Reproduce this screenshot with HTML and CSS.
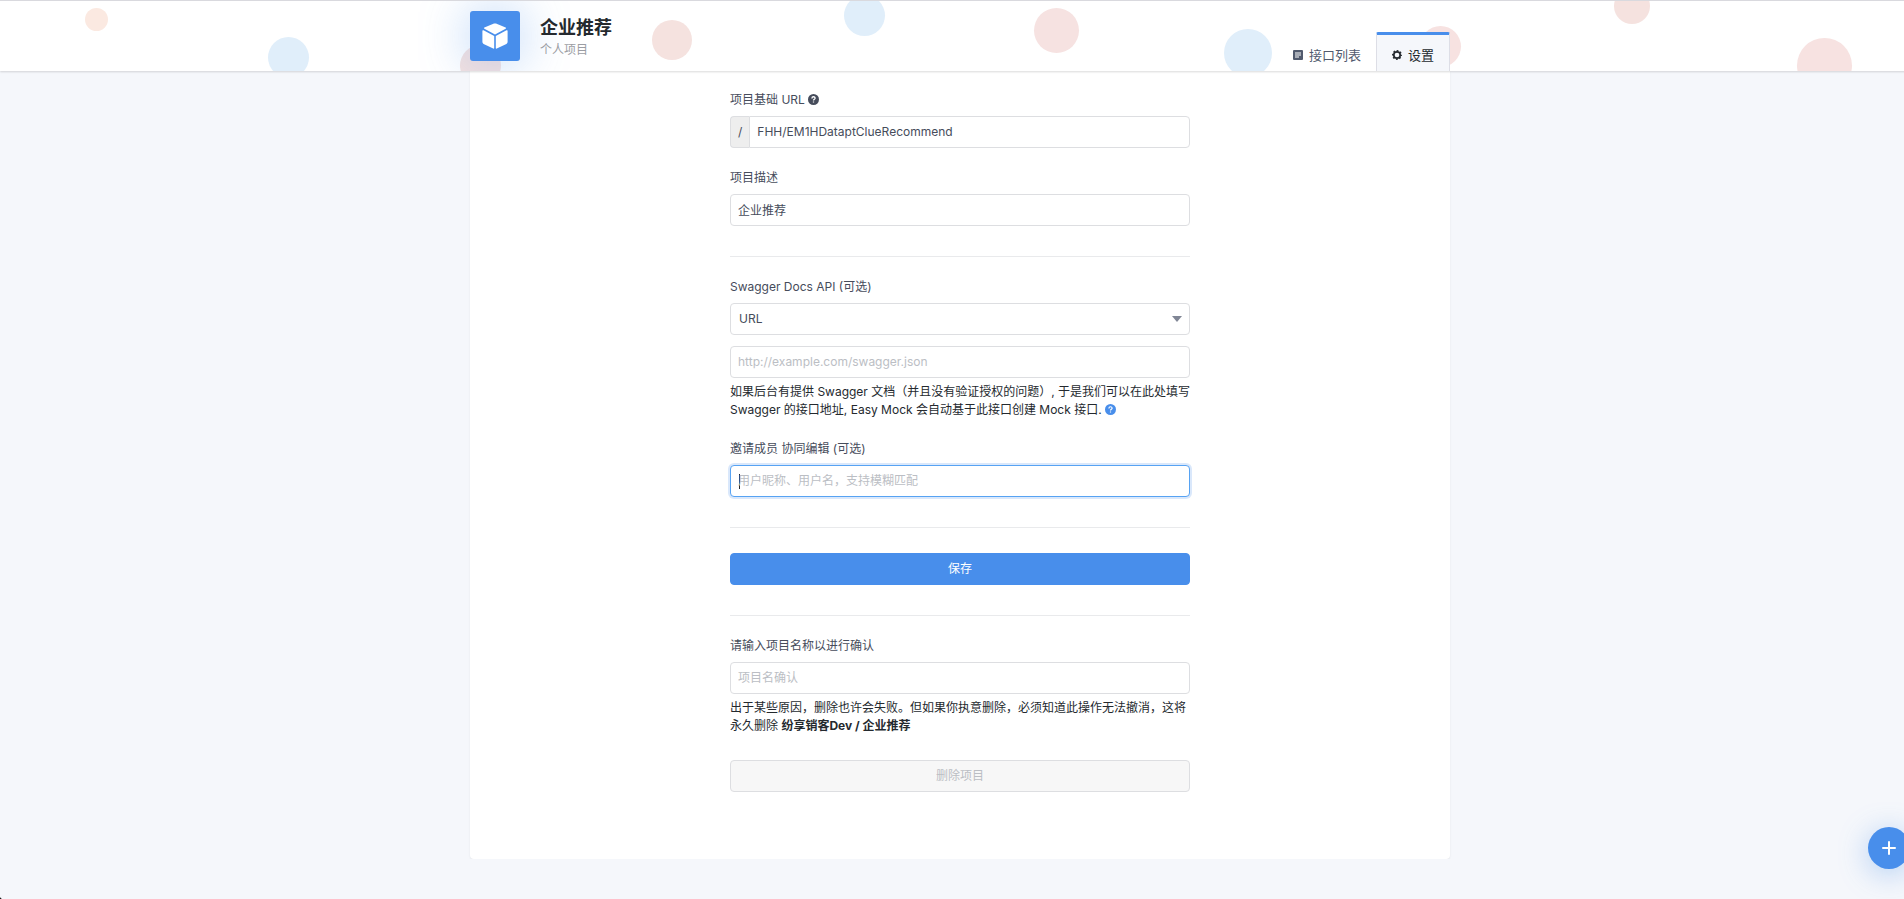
FILE: index.html
```html
<!DOCTYPE html>
<html lang="zh-CN">
<head>
    <meta charset="UTF-8">
    <meta name="viewport" content="width=device-width, initial-scale=1.0">
    <title>企业推荐 - 设置</title>
    <link rel="stylesheet" href="styles.css">
</head>
<body>

    <!-- 顶部 -->
    <header class="header">
        <svg class="bubbles" aria-hidden="true">
            <circle cx="96.5" cy="18.5" r="11.5" fill="#fbe9e1"/>
            <circle cx="288.5" cy="56.5" r="20.5" fill="#e0eefa"/>
            <circle cx="480.5" cy="64.5" r="20.5" fill="#f5e2e0"/>
            <circle cx="672" cy="39" r="20" fill="#f5e2df"/>
            <circle cx="864.5" cy="14.5" r="20.5" fill="#e0eefa"/>
            <circle cx="1056.5" cy="29.5" r="22.5" fill="#f6e2e1"/>
            <circle cx="1248" cy="52" r="24" fill="#e0eefa"/>
            <circle cx="1440.5" cy="45.5" r="20.5" fill="#f7e2e1"/>
            <circle cx="1632" cy="5" r="18" fill="#f5e2df"/>
            <circle cx="1824.5" cy="64.5" r="27.5" fill="#f7e2e1"/>
        </svg>
        <div class="container header-inner">
            <div class="logo">
                <svg width="26" height="26" viewBox="0 0 26 26" fill="#fff" aria-hidden="true">
                    <path d="M13 0.4 Q13.4 0.4 14 0.6 L23.6 4.6 Q24.6 5.2 23.6 5.8 L13 11.6 L2.4 5.8 Q1.4 5.2 2.4 4.6 L12 0.6 Q12.6 0.4 13 0.4 Z"/>
                    <path d="M0.4 8 Q0.4 6.8 1.5 7.3 L12.2 13.1 V25 Q12.2 26 11.2 25.5 L1.6 20.9 Q0.4 20.3 0.4 19 Z"/>
                    <path d="M25.6 8 Q25.6 6.8 24.5 7.3 L13.8 13.1 V25 Q13.8 26 14.8 25.5 L24.4 20.9 Q25.6 20.3 25.6 19 Z"/>
                </svg>
            </div>
            <div class="title">
                <h1>企业推荐</h1>
                <p>个人项目</p>
            </div>
            <nav class="tabs">
                <a class="tab" href="#list">
                    <svg width="10" height="10" viewBox="0 0 10 10" aria-hidden="true">
                        <rect width="10" height="10" rx="1" fill="#515a6e"/>
                        <path d="M2 3h6M2 5h6M2 7h4" stroke="#fff"/>
                    </svg>
                    接口列表
                </a>
                <a class="tab active" href="#setting">
                    <svg width="10" height="10" viewBox="0 0 10 10" fill="none" stroke="#24292e" aria-hidden="true">
                        <circle cx="5" cy="5" r="3.2" stroke-width="1.7"/>
                        <circle cx="5" cy="5" r="4.4" stroke-width="1.2" stroke-dasharray="1.8 1.656" stroke-dashoffset="0.9"/>
                    </svg>
                    设置
                </a>
            </nav>
        </div>
    </header>

    <!-- 设置表单 -->
    <main class="container panel">
        <form class="form">
            <div class="form-group">
                <label for="url">项目基础 URL
                    <svg class="help" width="11" height="11" viewBox="0 0 11 11" aria-hidden="true">
                        <circle cx="5.5" cy="5.5" r="5.5" fill="#464c5b"/>
                        <path d="M3.9 4.4C3.9 2.2 7.1 2.3 7.1 4.2C7.1 5.3 5.5 5.3 5.5 6.6M5.5 7.4V8.6" fill="none" stroke="#fff" stroke-width="1.3"/>
                    </svg>
                </label>
                <div class="input-group">
                    <span class="prepend">/</span>
                    <input type="text" id="url" value="FHH/EM1HDataptClueRecommend">
                </div>
            </div>

            <div class="form-group">
                <label for="description">项目描述</label>
                <input type="text" id="description" value="企业推荐">
            </div>

            <hr>

            <div class="form-group">
                <label for="swagger-type">Swagger Docs API (可选)</label>
                <div class="select">
                    <select id="swagger-type">
                        <option>URL</option>
                    </select>
                </div>
                <input type="text" id="swagger" placeholder="http://example.com/swagger.json" aria-label="Swagger URL">
                <p class="tip">如果后台有提供 Swagger 文档（并且没有验证授权的问题）, 于是我们可以在此处填写 Swagger 的接口地址, Easy Mock 会自动基于此接口创建 Mock 接口.
                    <a href="#swagger" aria-label="帮助"><svg class="help" width="11" height="11" viewBox="0 0 11 11" aria-hidden="true">
                        <circle cx="5.5" cy="5.5" r="5.5" fill="#488eeb"/>
                        <path d="M3.9 4.4C3.9 2.2 7.1 2.3 7.1 4.2C7.1 5.3 5.5 5.3 5.5 6.6M5.5 7.4V8.6" fill="none" stroke="#fff" stroke-width="1.2"/>
                    </svg></a>
                </p>
            </div>

            <div class="form-group">
                <label for="members">邀请成员 协同编辑 (可选)</label>
                <input type="text" id="members" placeholder="用户昵称、用户名，支持模糊匹配" autofocus>
            </div>

            <hr>

            <button type="button" class="btn btn-primary">保存</button>

            <hr>

            <div class="form-group">
                <label for="confirm">请输入项目名称以进行确认</label>
                <input type="text" id="confirm" placeholder="项目名确认">
                <p class="tip">出于某些原因，删除也许会失败。但如果你执意删除，必须知道此操作无法撤消，这将永久删除 <strong>纷享销客Dev / 企业推荐</strong></p>
            </div>

            <button type="button" class="btn" disabled>删除项目</button>
        </form>
    </main>

    <button type="button" class="fab" aria-label="新建">
        <svg width="14" height="14" viewBox="0 0 14 14" stroke="#fff" stroke-width="2" stroke-linecap="round" aria-hidden="true">
            <path d="M7 1v12M1 7h12"/>
        </svg>
    </button>

</body>
</html>
```

FILE: styles.css
```css
* {
    box-sizing: border-box;
}

html {
    overflow-x: hidden;
    background-color: #f5f7fb;
}

/* 页面比窗口宽一个滚动条 */
body {
    width: calc(100% + 16px);
    margin: 0;
    color: #24292e;
    font-family: Inter, "Noto Sans CJK SC", sans-serif;
    font-size: 12px;
    line-height: 18px;
}

/* 窗口左下角 */
body::after {
    content: "";
    position: fixed;
    left: 0;
    bottom: 0;
    width: 4px;
    height: 4px;
    background: radial-gradient(circle at 100% 0, transparent 4px, #111 5px);
}

h1, p {
    margin: 0;
}

.container {
    width: 100%;
    max-width: 980px;
    margin: 0 auto;
}

/* 顶部 */
.header {
    position: relative;
    z-index: 1;
    height: 71px;
    border-top: 1px solid #d9d9de;
    background-color: #fff;
    box-shadow: 0 1px 2px rgba(0, 0, 0, 0.15);
}

.bubbles {
    position: absolute;
    top: 0;
    left: 0;
    width: 100%;
    height: 100%;
}

.header-inner {
    position: relative;
    display: flex;
    height: 100%;
    padding-top: 10px;
    clip-path: inset(0 -100px);
}

.logo {
    display: flex;
    align-items: center;
    justify-content: center;
    width: 50px;
    height: 50px;
    border-radius: 3px;
    background-color: #488eeb;
    box-shadow: 0 0 50px rgba(72, 142, 235, 0.4);
}

.title {
    margin-left: 20px;
    padding-top: 2px;
}

.title h1 {
    font-size: 18px;
    line-height: 30px;
    font-weight: bold;
}

.title p {
    color: #9b9da3;
    line-height: 14px;
}

.tabs {
    display: flex;
    align-items: flex-end;
    margin-left: auto;
}

.tab {
    display: flex;
    align-items: center;
    gap: 6px;
    height: 39px;
    padding: 4px 15px 0;
    border-top: 3px solid transparent;
    color: #515a6e;
    font-size: 13px;
    text-decoration: none;
}

.tab.active {
    border: 1px solid #dddee6;
    border-top: 3px solid #488eeb;
    border-bottom: 0;
    border-radius: 2px 2px 0 0;
    background-color: #f5f7fb;
    color: #24292e;
}

/* 内容 */
.panel {
    padding: 20px 16px 67px;
    border-radius: 0 0 4px 4px;
    background-color: #fff;
    box-shadow: 0 1px 2px rgba(0, 0, 0, 0.08);
}

.form {
    max-width: 460px;
    margin: 0 auto;
}

.form-group + .form-group {
    margin-top: 21px;
}

label {
    display: block;
    margin-bottom: 7px;
    color: #464c5b;
}

.help {
    vertical-align: -1px;
}

hr {
    height: 1px;
    margin: 30px 0 21px;
    border: 0;
    background-color: #e9eaec;
}

/* 输入框 */
input, select {
    display: block;
    width: 100%;
    height: 32px;
    padding: 0 7px 2px;
    border: 1px solid #dddee1;
    border-radius: 4px;
    background-color: #fff;
    color: #464c5b;
    font-family: inherit;
    font-size: 12px;
    outline: none;
}

input::placeholder {
    color: #bbbec4;
}

input:focus {
    border-color: #57a3f3;
    box-shadow: 0 0 0 2px rgba(72, 142, 235, 0.2);
}

/* 空输入框的光标 */
input:focus:placeholder-shown {
    background: #fff linear-gradient(#24292e, #24292e) 8px center / 1px 15px no-repeat;
    caret-color: transparent;
}

.input-group {
    display: flex;
}

.input-group input {
    border-radius: 0 4px 4px 0;
}

.prepend {
    display: flex;
    align-items: center;
    padding: 0 7px;
    border: 1px solid #dddee1;
    border-right: 0;
    border-radius: 4px 0 0 4px;
    background-color: #eee;
    color: #464c5b;
}

.select {
    position: relative;
    margin-bottom: 11px;
}

.select select {
    appearance: none;
    padding: 0 8px 2px;
}

.select::after {
    content: "";
    position: absolute;
    top: 13px;
    right: 8px;
    border: 5px solid transparent;
    border-top: 6px solid #808695;
    border-bottom: 0;
    pointer-events: none;
}

.tip {
    margin-right: -6px;
    padding-top: 5px;
}

/* 按钮 */
.btn {
    display: block;
    width: 100%;
    height: 32px;
    margin-top: 25px;
    padding: 0 6px 3px;
    border: 1px solid #dddee1;
    border-radius: 4px;
    background-color: #f7f7f7;
    color: #bbbec4;
    font-family: inherit;
    font-size: 12px;
}

.btn-primary {
    border-color: #488eeb;
    background-color: #488eeb;
    color: #fff;
}

/* 悬浮按钮 */
.fab {
    position: fixed;
    right: -6px;
    bottom: 30px;
    display: flex;
    align-items: center;
    justify-content: center;
    width: 42px;
    height: 42px;
    padding: 0;
    border: 0;
    border-radius: 50%;
    background-color: #488eeb;
    box-shadow: 0 5px 30px rgba(72, 142, 235, 0.4);
}
```
